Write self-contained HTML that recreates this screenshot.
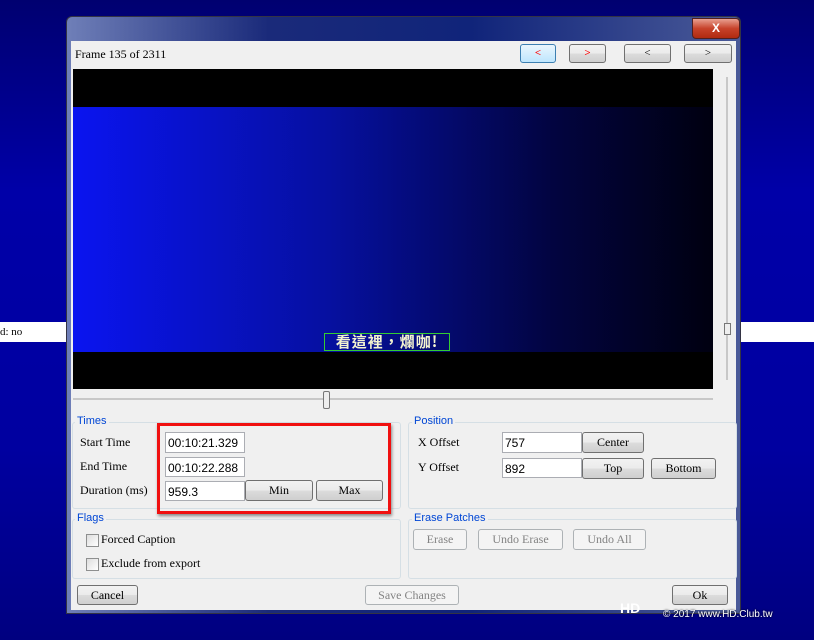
<html><head><style>
body{margin:0;width:814px;height:640px;overflow:hidden;background:linear-gradient(#000070,#0000a8 30%,#0000a0 70%,#000080);font-family:"Liberation Serif",serif;font-size:12px;position:relative}
.a{position:absolute}
.btn{position:absolute;border:1px solid #707070;border-radius:3px;background:linear-gradient(#f2f2f2,#ebebeb 50%,#dcdcdc 51%,#cfcfcf);text-align:center;box-sizing:border-box;color:#000;font-size:12px}
.dis{border-color:#adb2b5;background:#f4f4f4;color:#838383}
.tb{position:absolute;background:#fff;border:1px solid #abadb3;box-sizing:border-box;padding:3px 2px;font-family:"Liberation Sans",sans-serif;font-size:12px}
.grp{position:absolute;border:1px solid #d5dfe5;border-radius:3px;box-sizing:border-box}
.gl{position:absolute;color:#0046d5;font-family:"Liberation Sans",sans-serif;font-size:11px;background:#f0f0f0;padding:0 2px}
.cb{position:absolute;width:11px;height:11px;border:1px solid #8e8f8f;background:linear-gradient(135deg,#ddd,#fff)}
</style></head><body>
<div class="a" style="left:0;top:322px;width:67px;height:20px;background:#fff;font-size:11px;line-height:20px">d: no</div>
<div class="a" style="left:740px;top:322px;width:74px;height:20px;background:#fff"></div>
<div class="a" style="left:66px;top:16px;width:675px;height:598px;background:linear-gradient(90deg,#6f7fb8,#1a2a7a 30%,#10247a 60%,#4a5a98);border:1px solid #334;box-sizing:border-box;border-radius:6px 6px 0 0"></div>
<div class="a" style="left:692px;top:18px;width:46px;height:19px;background:linear-gradient(#e8a090,#c7422a 50%,#b02a10);border:1px solid #502020;border-radius:0 4px 4px 4px;color:#fff;font:bold 12px 'Liberation Sans';text-align:center;line-height:19px">X</div>
<div class="a" style="left:71px;top:41px;width:665px;height:569px;background:#f0f0f0"></div>
<div class="a" style="left:75px;top:47px">Frame 135 of 2311</div>
<div class="btn" style="left:520px;top:44px;width:36px;height:19px;border-color:#3c7fb1;background:linear-gradient(#eaf6fd,#bee6fd);color:red;font-weight:bold;line-height:17px;font-size:11px">&lt;</div>
<div class="btn" style="left:569px;top:44px;width:37px;height:19px;color:red;font-weight:bold;line-height:17px;font-size:11px">&gt;</div>
<div class="btn" style="left:624px;top:44px;width:47px;height:19px;line-height:17px;font-size:11px">&lt;</div>
<div class="btn" style="left:684px;top:44px;width:48px;height:19px;line-height:17px;font-size:11px">&gt;</div>
<div class="a" style="left:73px;top:69px;width:640px;height:320px;background:#000"></div>
<div class="a" style="left:73px;top:107px;width:640px;height:245px;background:linear-gradient(90deg,#0a14f0,#0610a0 40%,#020440 75%,#000010)"></div>
<div class="a" style="left:324px;top:333px;width:126px;height:18px;border:1px solid #3c3;box-sizing:border-box;color:#f4f4d0;font-family:'Noto Sans CJK TC',sans-serif;font-weight:bold;font-size:15px;line-height:16px;text-align:center;letter-spacing:1px">看這裡，爛咖!</div>
<div class="a" style="left:726px;top:77px;width:2px;height:303px;background:#c8c8c8"></div>
<div class="a" style="left:724px;top:323px;width:5px;height:10px;border:1px solid #777;background:#eee"></div>
<div class="a" style="left:73px;top:398px;width:640px;height:2px;background:#c8c8c8"></div>
<div class="a" style="left:323px;top:391px;width:5px;height:16px;border:1px solid #777;background:#eee;border-radius:2px"></div>
<div class="grp" style="left:72px;top:422px;width:329px;height:87px"></div><div class="gl" style="left:75px;top:415px">Times</div>
<div class="a" style="left:80px;top:435px">Start Time</div>
<div class="a" style="left:80px;top:459px">End Time</div>
<div class="a" style="left:80px;top:483px">Duration (ms)</div>
<div class="tb" style="left:165px;top:432px;width:80px;height:21px">00:10:21.329</div>
<div class="tb" style="left:165px;top:457px;width:80px;height:20px">00:10:22.288</div>
<div class="tb" style="left:165px;top:481px;width:80px;height:20px">959.3</div>
<div class="btn" style="left:245px;top:480px;width:68px;height:21px;line-height:19px">Min</div>
<div class="btn" style="left:316px;top:480px;width:67px;height:21px;line-height:19px">Max</div>
<div class="a" style="left:157px;top:423px;width:228px;height:85px;border:3px solid #f01010;box-shadow:1px 2px 3px #888"></div>
<div class="grp" style="left:408px;top:422px;width:329px;height:87px"></div><div class="gl" style="left:412px;top:415px">Position</div>
<div class="a" style="left:418px;top:435px">X Offset</div>
<div class="a" style="left:418px;top:460px">Y Offset</div>
<div class="tb" style="left:502px;top:432px;width:80px;height:21px">757</div>
<div class="tb" style="left:502px;top:458px;width:80px;height:20px">892</div>
<div class="btn" style="left:582px;top:432px;width:62px;height:21px;line-height:19px">Center</div>
<div class="btn" style="left:582px;top:458px;width:62px;height:21px;line-height:19px">Top</div>
<div class="btn" style="left:651px;top:458px;width:65px;height:21px;line-height:19px">Bottom</div>
<div class="grp" style="left:72px;top:519px;width:329px;height:60px"></div><div class="gl" style="left:75px;top:512px">Flags</div>
<div class="cb" style="left:86px;top:534px"></div><div class="a" style="left:101px;top:532px">Forced Caption</div>
<div class="cb" style="left:86px;top:558px"></div><div class="a" style="left:101px;top:556px">Exclude from export</div>
<div class="grp" style="left:408px;top:519px;width:329px;height:60px"></div><div class="gl" style="left:412px;top:512px">Erase Patches</div>
<div class="btn dis" style="left:413px;top:529px;width:54px;height:21px;line-height:19px">Erase</div>
<div class="btn dis" style="left:478px;top:529px;width:85px;height:21px;line-height:19px">Undo Erase</div>
<div class="btn dis" style="left:573px;top:529px;width:73px;height:21px;line-height:19px">Undo All</div>
<div class="btn" style="left:77px;top:585px;width:61px;height:20px;line-height:18px">Cancel</div>
<div class="btn dis" style="left:365px;top:585px;width:94px;height:20px;line-height:18px">Save Changes</div>
<div class="btn" style="left:672px;top:585px;width:56px;height:20px;line-height:18px">Ok</div>
<div class="a" style="left:620px;top:600px;color:#fff;font:bold 14px 'Liberation Sans'">HD</div>
<div class="a" style="left:663px;top:609px;color:#fff;font:10px 'Liberation Sans';text-shadow:0 0 2px #000">© 2017 www.HD.Club.tw</div>
</body></html>
